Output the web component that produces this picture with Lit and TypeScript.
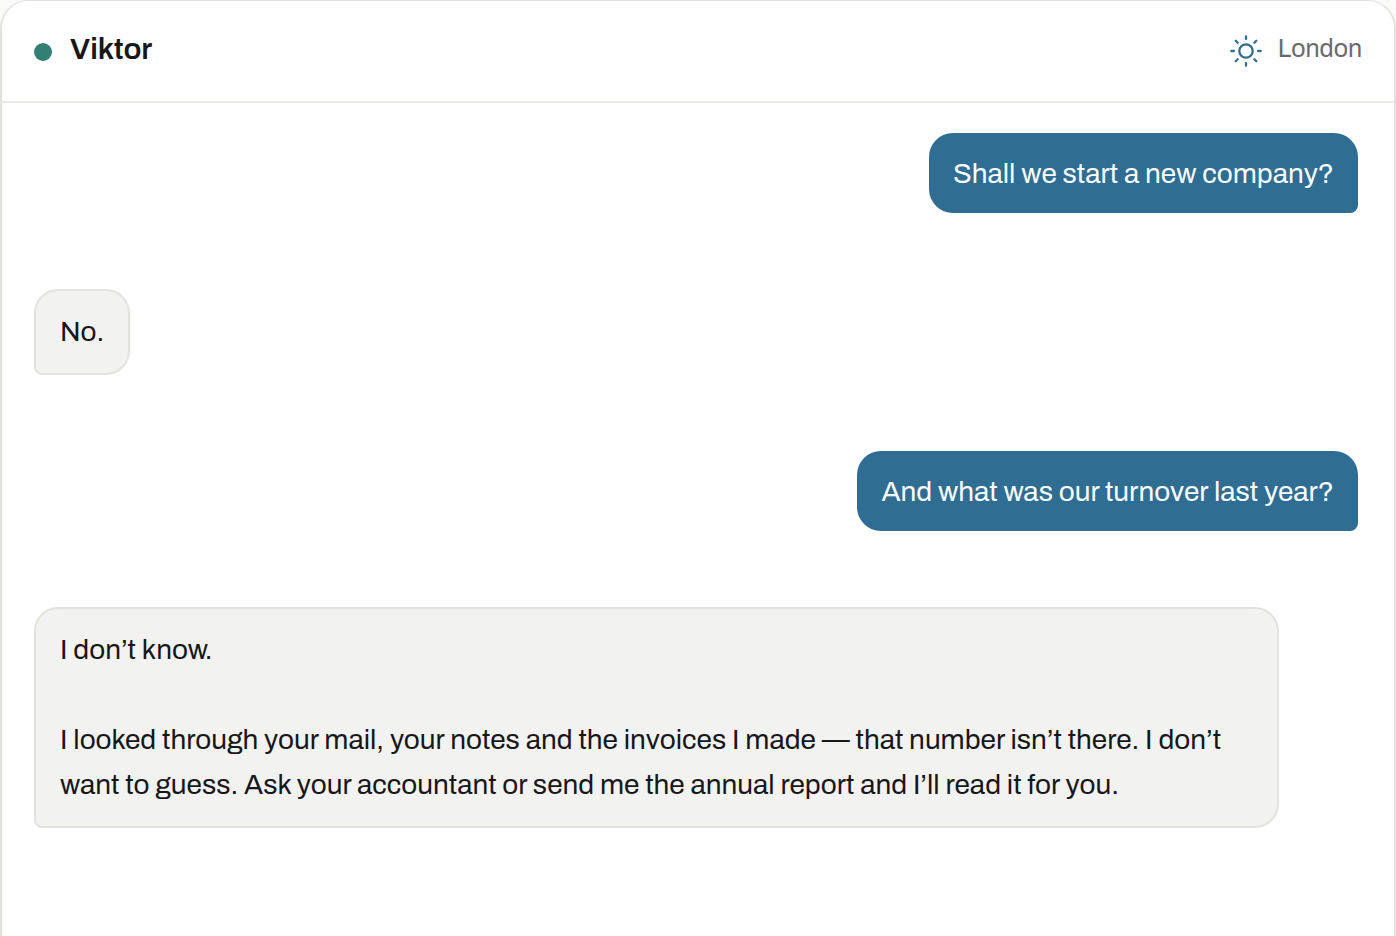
import { LitElement, html, css } from "lit";
import { customElement, property } from "lit/decorators.js";

interface Message {
  from: "user" | "assistant";
  paragraphs: string[];
}

const MESSAGES: Message[] = [
  { from: "user", paragraphs: ["Shall we start a new company?"] },
  { from: "assistant", paragraphs: ["No."] },
  { from: "user", paragraphs: ["And what was our turnover last year?"] },
  {
    from: "assistant",
    paragraphs: [
      "I don’t know.",
      "I looked through your mail, your notes and the invoices I made — that number isn’t there. I don’t want to guess. Ask your accountant or send me the annual report and I’ll read it for you.",
    ],
  },
];

@customElement("chat-bubble")
export class ChatBubble extends LitElement {
  @property({ reflect: true }) from: Message["from"] = "user";
  @property({ attribute: false }) paragraphs: string[] = [];

  static styles = css`
    :host {
      display: block;
      box-sizing: border-box;
      max-width: 94%;
      border-radius: 24px;
      font-size: 28px;
      line-height: 45px;
    }
    :host([from="user"]) {
      align-self: flex-end;
      padding: 18px 24px 17px;
      border-bottom-right-radius: 8px;
      background: #2f6d93;
      color: #fbfdfe;
    }
    :host([from="assistant"]) {
      align-self: flex-start;
      padding: 18px 24px 19px;
      border: 2px solid #e2e2df;
      border-bottom-left-radius: 8px;
      background: #f2f2f0;
      color: #17171a;
    }
    .text {
      margin: 0;
    }
    .text + .text {
      margin-top: 45px;
    }
  `;

  render() {
    return this.paragraphs.map((p) => html`<p class="text">${p}</p>`);
  }
}

@customElement("app-root")
export class AppRoot extends LitElement {
  static styles = css`
    :host {
      display: flex;
      min-height: 100vh;
      background: #fafaf9;
      font-family: "Archivo", "Liberation Sans", Arial, sans-serif;
    }
    .card {
      flex: 1;
      min-width: 0;
      border: 2px solid #e2e2df;
      border-top-width: 1px;
      border-bottom: 0;
      border-radius: 28px 28px 0 0;
      background: #fff;
    }
    .header {
      display: flex;
      align-items: center;
      justify-content: space-between;
      padding: 26px 32px 28px;
      border-bottom: 2px solid #e9e9e6;
    }
    .who,
    .place {
      display: flex;
      align-items: center;
    }
    .who {
      gap: 18px;
    }
    .dot {
      width: 18px;
      height: 18px;
      margin-top: 4px;
      border-radius: 50%;
      background: #347f74;
    }
    .name {
      margin: 0;
      padding-bottom: 2px;
      font-size: 30px;
      line-height: 44px;
      font-weight: 600;
      color: #17171a;
    }
    .place {
      gap: 16px;
      padding-bottom: 2px;
      font-size: 25px;
      line-height: 44px;
      color: #6b696c;
    }
    .sun {
      width: 32px;
      height: 32px;
      margin-top: 4px;
      fill: none;
      stroke: #2f6d93;
      stroke-width: 2.3;
      stroke-linecap: round;
    }
    .thread {
      display: flex;
      flex-direction: column;
      gap: 76px;
      padding: 30px 36px 76px 32px;
    }
  `;

  render() {
    return html`
      <main class="card">
        <header class="header">
          <div class="who">
            <span class="dot"></span>
            <h1 class="name">Viktor</h1>
          </div>
          <div class="place">
            <svg class="sun" viewBox="0 0 32 32" aria-hidden="true">
              <circle cx="16" cy="16" r="6.7" />
              <path
                d="M16 1.3v2.6M16 28.1v2.6M1.3 16h2.6M28.1 16h2.6M5.7 5.7l2 2M24.3 24.3l2 2M5.7 26.3l2-2M24.3 7.7l2-2"
              />
            </svg>
            <span>London</span>
          </div>
        </header>
        <section class="thread">
          ${MESSAGES.map(
            (m) => html`<chat-bubble from=${m.from} .paragraphs=${m.paragraphs}></chat-bubble>`
          )}
        </section>
      </main>
    `;
  }
}
